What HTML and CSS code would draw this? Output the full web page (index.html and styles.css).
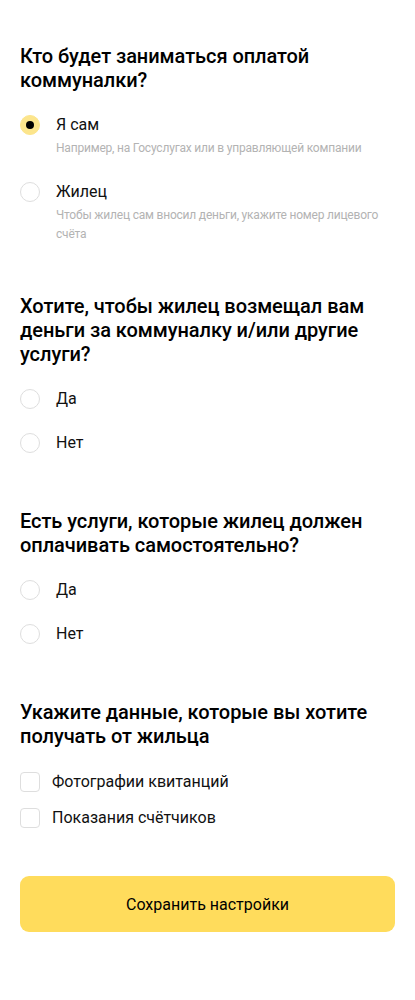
FILE: index.html
```html
<!DOCTYPE html>
<html lang="ru">
<head>
<meta charset="utf-8">
<link rel="stylesheet" href="styles.css">
</head>
<body>
<main class="page">
  <section class="section">
    <h2 class="title">Кто будет заниматься оплатой коммуналки?</h2>
    <div class="options">
      <div class="option">
        <span class="radio radio--checked"></span>
        <div class="option-body">
          <div class="label">Я сам</div>
          <div class="desc">Например, на Госуслугах или в управляющей компании</div>
        </div>
      </div>
      <div class="option">
        <span class="radio"></span>
        <div class="option-body">
          <div class="label">Жилец</div>
          <div class="desc">Чтобы жилец сам вносил деньги, укажите номер лицевого счёта</div>
        </div>
      </div>
    </div>
  </section>

  <section class="section">
    <h2 class="title">Хотите, чтобы жилец возмещал вам деньги за коммуналку и/или другие услуги?</h2>
    <div class="options">
      <div class="option"><span class="radio"></span><div class="label">Да</div></div>
      <div class="option"><span class="radio"></span><div class="label">Нет</div></div>
    </div>
  </section>

  <section class="section">
    <h2 class="title">Есть услуги, которые жилец должен оплачивать самостоятельно?</h2>
    <div class="options">
      <div class="option"><span class="radio"></span><div class="label">Да</div></div>
      <div class="option"><span class="radio"></span><div class="label">Нет</div></div>
    </div>
  </section>

  <section class="section">
    <h2 class="title">Укажите данные, которые вы хотите получать от жильца</h2>
    <div class="checks">
      <div class="check"><span class="box"></span><div class="label">Фотографии квитанций</div></div>
      <div class="check"><span class="box"></span><div class="label">Показания счётчиков</div></div>
    </div>
  </section>

  <button class="save" type="button">Сохранить настройки</button>
</main>
</body>
</html>
```

FILE: styles.css
```css
* { box-sizing: border-box; }

html, body {
  margin: 0;
  background: #fff;
}

body {
  font-family: Roboto, "Noto Sans", sans-serif;
  color: #000;
}

.page {
  padding: 44px 20px 40px;
  display: flex;
  flex-direction: column;
}

.section + .section {
  margin-top: 56px;
}

.section:nth-child(2) { margin-top: 50px; }

.title {
  margin: 0;
  font-size: 20px;
  line-height: 24px;
  font-weight: 500;
  letter-spacing: -0.05px;
}

.options {
  margin-top: 23px;
  display: flex;
  flex-direction: column;
  gap: 24px;
}

.option {
  display: flex;
  align-items: flex-start;
  gap: 16px;
}

.radio {
  flex: none;
  width: 20px;
  height: 20px;
  border-radius: 50%;
  border: 1px solid #dedede;
  display: flex;
  align-items: center;
  justify-content: center;
}

.radio--checked {
  border-color: #fce58c;
  background: #fce58c;
}

.radio--checked::after {
  content: "";
  width: 8px;
  height: 8px;
  border-radius: 50%;
  background: #000;
}

.label {
  font-size: 16px;
  line-height: 20px;
  color: #111;
}

.desc {
  margin-top: 4px;
  font-size: 12px;
  line-height: 19px;
  color: #b3b3b3;
  letter-spacing: -0.2px;
}

.checks {
  margin-top: 24px;
  display: flex;
  flex-direction: column;
  gap: 16px;
}

.check {
  display: flex;
  align-items: center;
  gap: 12px;
}

.box {
  flex: none;
  width: 20px;
  height: 20px;
  border-radius: 4px;
  border: 1px solid #dedede;
}

.save {
  margin-top: 48px;
  height: 56px;
  width: 100%;
  border: 0;
  border-radius: 9px;
  background: #ffdc5c;
  font-family: inherit;
  font-size: 16px;
  color: #000;
  cursor: pointer;
}
```
